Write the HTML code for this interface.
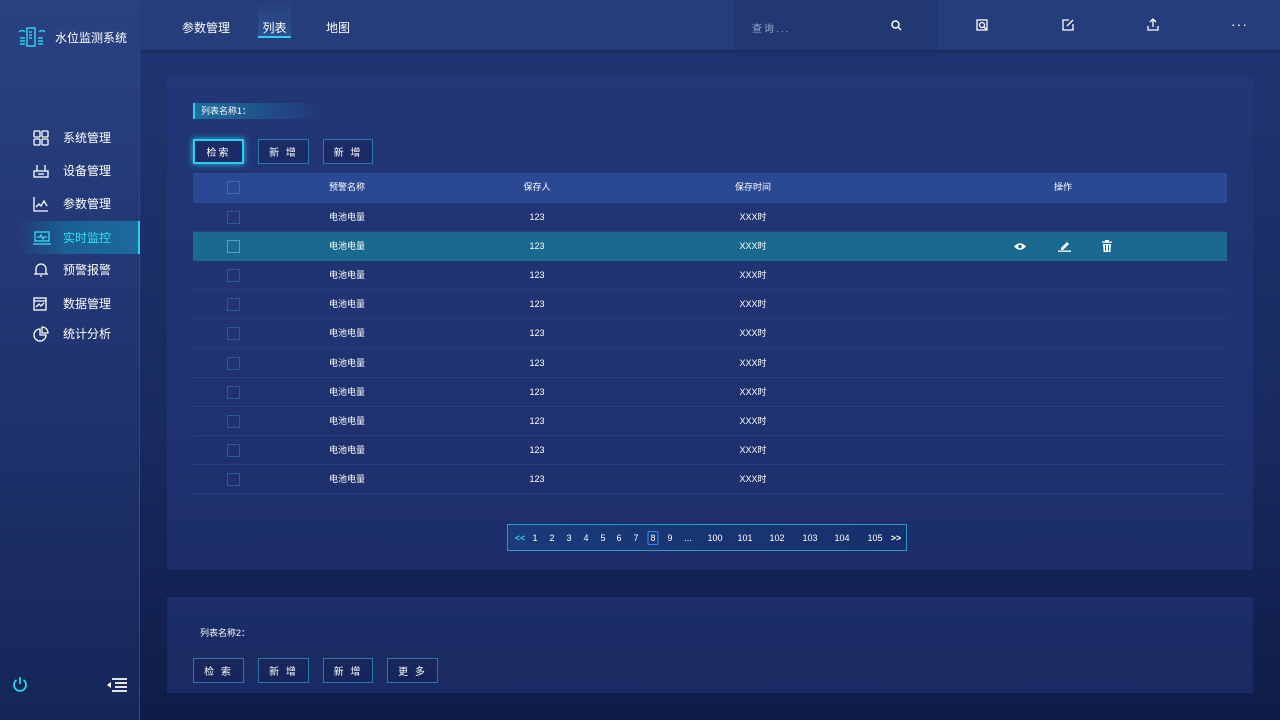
<!DOCTYPE html>
<html><head><meta charset="utf-8"><style>
*{margin:0;padding:0;box-sizing:border-box}
body{width:1280px;height:720px;overflow:hidden;font-family:"Liberation Sans","Noto Sans CJK SC",sans-serif;color:#fff;background:linear-gradient(180deg,#203572 0%,#182a60 60%,#0f1c48 100%);position:relative}
.side{position:absolute;left:0;top:0;width:140px;height:720px;background:linear-gradient(180deg,#2a4282 0%,#203470 50%,#152658 100%);border-right:1px solid #2b4a8e}
.logo{position:absolute;left:0;top:12px;width:140px;height:50px;display:flex;align-items:center;padding-left:18px;font-size:12px}
.nav{position:absolute;left:0;width:140px;height:33px;display:flex;align-items:center;font-size:12px}
.nav svg{position:absolute;left:33px}
.nav span{position:absolute;left:63px}
.nav.act{background:linear-gradient(90deg,rgba(30,110,160,0) 0%,#1b5f93 40%,#1d6a9c 100%);border-right:2px solid #27d4f0;color:#33e0f4;left:18px;width:122px}
.nav.act svg{left:15px}.nav.act span{left:45px}
.top{position:absolute;left:140px;top:0;width:1140px;height:50px;background:#263d7c;box-shadow:0 2px 4px rgba(0,0,0,.2)}
.tab{position:absolute;top:19px;font-size:12px}
.panel{position:absolute;left:167px;width:1086px;background:rgba(40,60,130,.45)}
.btn{position:absolute;height:25px;border:1px solid #2a7aa8;font-size:10px;display:flex;align-items:center;justify-content:center;letter-spacing:2px;background:rgba(20,30,80,.4)}
.btn.sel{border:2px solid #2fd0ee;box-shadow:0 0 6px #27c4e8}
.row{position:absolute;left:193px;width:1034px;height:29px;border-bottom:1px solid #25407e;font-size:9px}
.row div{position:absolute;top:0;line-height:29px;transform:translateX(-50%)}
.cb{width:13px;height:13px;border:1px solid #2c5a98;position:absolute;left:34px;top:8px}
.pg{position:absolute;left:507px;top:524px;width:400px;height:27px;border:1px solid #2a9ac0;background:linear-gradient(90deg,#1a3a7a,#17306c);font-size:9px}
.pg span{position:absolute;top:8px;transform:translateX(-50%)}
</style></head><body>
<div class="side">
 <div class="logo"><svg width="28" height="22" viewBox="0 0 28 22" style="margin-right:9px"><path d="M1 6q3-3 6 0M21 6q3-3 6 0" stroke="#2fd0ee" fill="none" stroke-width="1.5"/><rect x="9" y="2" width="8" height="18" fill="none" stroke="#2fd0ee" stroke-width="1.5"/><path d="M11 6h3M11 9h3M11 12h3M2 12h5M2 15h5M2 18h5M20 12h5M20 15h5M20 18h5" stroke="#2fd0ee" stroke-width="1.5"/></svg>水位监测系统</div>
 <div class="nav" style="top:121px"><svg width="16" height="16" fill="none" stroke="#fff" stroke-width="1.3"><rect x="1" y="1" width="6" height="6" rx="1"/><rect x="9" y="1" width="6" height="6" rx="1"/><rect x="1" y="9" width="6" height="6" rx="1"/><rect x="9" y="9" width="6" height="6" rx="1"/></svg><span>系统管理</span></div>
 <div class="nav" style="top:154px"><svg width="16" height="16" fill="none" stroke="#fff" stroke-width="1.3"><path d="M4 2v6M12 2v6"/><rect x="1" y="8" width="14" height="6"/><path d="M5 11h6"/></svg><span>设备管理</span></div>
 <div class="nav" style="top:187px"><svg width="16" height="16" fill="none" stroke="#fff" stroke-width="1.3"><path d="M1 1v14h14M3 11l3-3 2 2 3-5 3 5"/></svg><span>参数管理</span></div>
 <div class="nav act" style="top:221px"><svg width="18" height="14" fill="none" stroke="#33e0f4" stroke-width="1.3"><rect x="2" y="1" width="14" height="9"/><path d="M0 13h18M4 6h3l1-2 2 4 1-2h3"/></svg><span>实时监控</span></div>
 <div class="nav" style="top:253px"><svg width="16" height="16" fill="none" stroke="#fff" stroke-width="1.3"><path d="M3 12V7a5 5 0 0 1 10 0v5zM1 12h14M7 14h2"/></svg><span>预警报警</span></div>
 <div class="nav" style="top:287px"><svg width="14" height="14" fill="none" stroke="#fff" stroke-width="1.3"><rect x="1" y="1" width="12" height="12"/><path d="M1 4h12M3 10l3-3 2 2 3-3"/></svg><span>数据管理</span></div>
 <div class="nav" style="top:317px"><svg width="16" height="16" fill="none" stroke="#fff" stroke-width="1.3"><path d="M7 3a6 6 0 1 0 6 6H7z"/><path d="M9 1a6 6 0 0 1 6 6H9z"/></svg><span>统计分析</span></div>
 <svg style="position:absolute;left:12px;top:676px" width="16" height="17" fill="none" stroke="#27d4f0" stroke-width="1.8"><path d="M8 1v7M4.5 4a6 6 0 1 0 7 0"/></svg>
 <svg style="position:absolute;left:106px;top:677px" width="22" height="16" fill="none" stroke="#fff" stroke-width="1.8"><path d="M6 2h15M9 6h12M9 10h12M6 14h15"/><path d="M1 8l4-3v6z" fill="#fff" stroke="none"/></svg>
</div>
<div class="top">
 <div class="tab" style="left:42px">参数管理</div>
 <div class="tab" style="left:118px;top:0;height:38px;width:33px;background:linear-gradient(180deg,transparent,#2d5190);border-bottom:2px solid #2fd0ee;text-align:center;padding-top:19px">列表</div>
 <div class="tab" style="left:186px">地图</div>
 <div style="position:absolute;left:593px;top:0;width:205px;height:50px;background:#223873"></div>
 <div style="position:absolute;left:612px;top:20px;font-size:10px;color:#9aa8cc;letter-spacing:2px">查询...</div>
 <svg style="position:absolute;left:751px;top:20px" width="11" height="11" fill="none" stroke="#fff" stroke-width="1.5"><circle cx="4.5" cy="4.5" r="3.5"/><path d="M7 7l3 3"/></svg>
 <svg style="position:absolute;left:836px;top:19px" width="12" height="12" fill="none" stroke="#fff" stroke-width="1.3"><rect x="1" y="1" width="10" height="10"/><circle cx="6" cy="6" r="2.5"/><path d="M8 8l3 3"/></svg>
 <svg style="position:absolute;left:922px;top:19px" width="12" height="12" fill="none" stroke="#fff" stroke-width="1.3"><path d="M7 1H1v10h10V5M5 7l6-6"/></svg>
 <svg style="position:absolute;left:1007px;top:18px" width="12" height="13" fill="none" stroke="#fff" stroke-width="1.3"><path d="M6 9V1M3 4l3-3 3 3M1 8v4h10V8"/></svg>
 <div style="position:absolute;left:1091px;top:16px;font-size:14px;letter-spacing:1px">···</div>
</div>
<div class="panel" style="top:77px;height:493px"></div>
<div style="position:absolute;left:193px;top:103px;width:130px;height:16px;border-left:2px solid #2fd0ee;background:linear-gradient(90deg,#1f6fa0,rgba(31,111,160,0));font-size:9px;line-height:16px;padding-left:6px">列表名称1：</div>
<div class="btn sel" style="left:193px;top:139px;width:51px">检索</div>
<div class="btn" style="left:258px;top:139px;width:51px">新 增</div>
<div class="btn" style="left:323px;top:139px;width:50px">新 增</div>
<div class="row" style="top:173px;height:30px;background:#2a4994;border:none;font-size:9px"><span class="cb" style="border-color:#3a6cb0"></span><div style="left:154px">预警名称</div><div style="left:344px">保存人</div><div style="left:560px">保存时间</div><div style="left:870px">操作</div></div>
<div class="row" style="top:203px"><span class="cb"></span><div style="left:154px">电池电量</div><div style="left:344px">123</div><div style="left:560px">XXX时</div></div>
<div class="row" style="top:232px;background:#1a6a8f;border:none"><span class="cb" style="border-color:#5a9cbc"></span><div style="left:154px">电池电量</div><div style="left:344px">123</div><div style="left:560px">XXX时</div>
<svg style="position:absolute;left:820px;top:10px" width="14" height="9"><path d="M1 4.5Q7-2 13 4.5Q7 11 1 4.5z" fill="#fff"/><circle cx="7" cy="4.5" r="1.8" fill="#1a6a8f"/></svg>
<svg style="position:absolute;left:865px;top:8px" width="13" height="12" fill="#fff"><path d="M3 8l6-6 2 2-6 6H3z"/><rect x="0" y="10.5" width="13" height="1.3"/></svg>
<svg style="position:absolute;left:909px;top:8px" width="10" height="12" fill="#fff"><rect x="0" y="1.5" width="10" height="1.3"/><rect x="3" y="0" width="4" height="1.5"/><path d="M1 4h8l-.6 8H1.6z"/><path d="M3.5 5v6M6.5 5v6" stroke="#1a6a8f"/></svg></div>
<div class="row" style="top:261px"><span class="cb"></span><div style="left:154px">电池电量</div><div style="left:344px">123</div><div style="left:560px">XXX时</div></div>
<div class="row" style="top:290px"><span class="cb"></span><div style="left:154px">电池电量</div><div style="left:344px">123</div><div style="left:560px">XXX时</div></div>
<div class="row" style="top:319px"><span class="cb"></span><div style="left:154px">电池电量</div><div style="left:344px">123</div><div style="left:560px">XXX时</div></div>
<div class="row" style="top:349px"><span class="cb"></span><div style="left:154px">电池电量</div><div style="left:344px">123</div><div style="left:560px">XXX时</div></div>
<div class="row" style="top:378px"><span class="cb"></span><div style="left:154px">电池电量</div><div style="left:344px">123</div><div style="left:560px">XXX时</div></div>
<div class="row" style="top:407px"><span class="cb"></span><div style="left:154px">电池电量</div><div style="left:344px">123</div><div style="left:560px">XXX时</div></div>
<div class="row" style="top:436px"><span class="cb"></span><div style="left:154px">电池电量</div><div style="left:344px">123</div><div style="left:560px">XXX时</div></div>
<div class="row" style="top:465px"><span class="cb"></span><div style="left:154px">电池电量</div><div style="left:344px">123</div><div style="left:560px">XXX时</div></div>
<div class="pg">
<span style="left:12px;color:#2fd0ee;font-weight:bold">&lt;&lt;</span><span style="left:27px">1</span><span style="left:44px">2</span><span style="left:61px">3</span><span style="left:78px">4</span><span style="left:95px">5</span><span style="left:111px">6</span><span style="left:128px">7</span>
<span style="left:145px;top:6px;border:1px solid #2f8ff0;border-radius:2px;padding:1px 2px">8</span><span style="left:162px">9</span><span style="left:180px">...</span><span style="left:207px">100</span><span style="left:237px">101</span><span style="left:269px">102</span><span style="left:302px">103</span><span style="left:334px">104</span><span style="left:367px">105</span><span style="left:388px;font-weight:bold">&gt;&gt;</span></div>
<div class="panel" style="top:597px;height:96px"></div>
<div style="position:absolute;left:200px;top:626px;font-size:9px">列表名称2：</div>
<div class="btn" style="left:193px;top:658px;width:51px">检 索</div>
<div class="btn" style="left:258px;top:658px;width:51px">新 增</div>
<div class="btn" style="left:323px;top:658px;width:50px">新 增</div>
<div class="btn" style="left:387px;top:658px;width:51px">更 多</div>
</body></html>
